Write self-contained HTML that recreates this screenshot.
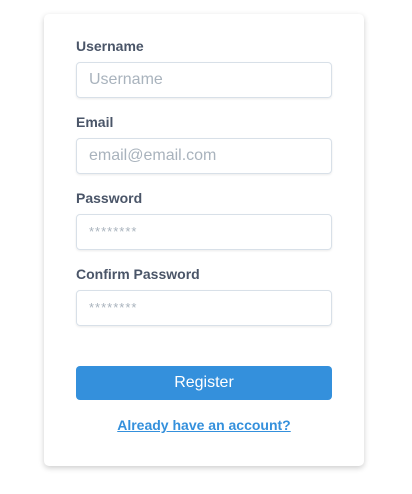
<!DOCTYPE html>
<html><head><style>
body{margin:0;background:#fff;font-family:"Liberation Sans",Arial,sans-serif;width:412px;height:494px;overflow:hidden;position:relative}
.card{position:absolute;left:44px;top:14px;width:320px;height:452px;background:#fff;border-radius:5px;box-shadow:0 2px 6px rgba(0,0,0,.2)}
.lbl{position:absolute;left:32px;font-size:14px;font-weight:bold;color:#4a5568}
.in{position:absolute;left:32px;width:256px;height:36px;box-sizing:border-box;border:1px solid #d8e0e8;border-radius:4px;box-shadow:0 1px 2px rgba(0,0,0,.08);font-size:16px;color:#a9b3bd;line-height:34px;padding-left:12px}
.pw{font-size:13px;letter-spacing:1px;color:#a9b3bd}
.btn{position:absolute;left:32px;top:352px;width:256px;height:34px;background:#3490dc;border-radius:4px;color:#fff;font-size:16px;text-align:center;line-height:34px}
.lnk{position:absolute;left:0;width:320px;top:403px;text-align:center;font-size:14px;font-weight:bold;color:#3490dc;text-decoration:underline}
</style></head><body>
<div class="card">
<div class="lbl" style="top:24px">Username</div>
<div class="in" style="top:48px">Username</div>
<div class="lbl" style="top:100px">Email</div>
<div class="in" style="top:124px">email@email.com</div>
<div class="lbl" style="top:176px">Password</div>
<div class="in pw" style="top:200px">********</div>
<div class="lbl" style="top:252px">Confirm Password</div>
<div class="in pw" style="top:276px">********</div>
<div class="btn">Register</div>
<div class="lnk">Already have an account?</div>
</div>
</body></html>
